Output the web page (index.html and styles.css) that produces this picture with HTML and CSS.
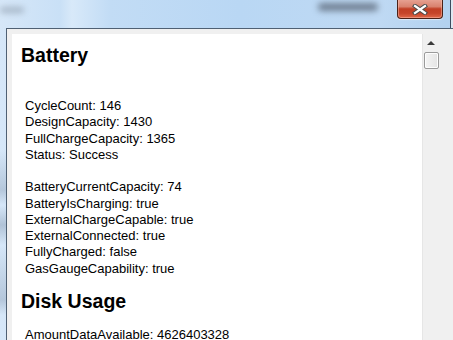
FILE: index.html
```html
<!DOCTYPE html>
<html lang="en">
<head>
    <meta charset="UTF-8">
    <title>Device Info</title>
    <link rel="stylesheet" href="styles.css">
</head>
<body>
    <div class="window">
        <!-- glass title bar -->
        <div class="titlebar">
            <span class="smudge smudge-left"></span>
            <span class="smudge smudge-right"></span>
            <button class="close-btn" aria-label="Close">
                <svg width="16" height="11" viewBox="0 0 16 11">
                    <path d="M3 2 L13 9 M13 2 L3 9" stroke="#4b4b4b" stroke-width="4.2" stroke-linecap="square"/>
                    <path d="M3 2 L13 9 M13 2 L3 9" stroke="#ffffff" stroke-width="2.2" stroke-linecap="square"/>
                </svg>
            </button>
        </div>

        <div class="client">
            <div class="content">
                <h2>Battery</h2>
                <div class="props lead">
                    <p>CycleCount: 146<br>DesignCapacity: 1430<br>FullChargeCapacity: 1365<br>Status: Success</p>
                    <p>BatteryCurrentCapacity: 74<br>BatteryIsCharging: true<br>ExternalChargeCapable: true<br>ExternalConnected: true<br>FullyCharged: false<br>GasGaugeCapability: true</p>
                </div>

                <h2>Disk Usage</h2>
                <div class="props">
                    <p>AmountDataAvailable: 4626403328</p>
                </div>
            </div>

            <!-- vertical scrollbar -->
            <div class="scrollbar">
                <div class="arrow-up"></div>
                <div class="thumb"></div>
            </div>
        </div>
    </div>
</body>
</html>
```

FILE: styles.css
```css
html, body {
    margin: 0;
    height: 100%;
    overflow: hidden;
}

body {
    background: #dfe8f1;
    font-family: "Liberation Sans", Arial, sans-serif;
}

/* Aero glass frame */
.window {
    width: 450px;
    height: 340px;
    border-right: 1px solid #3d4c5e;
    background:
        linear-gradient(to bottom, rgba(255,255,255,0) 150px, rgba(120,140,165,0.35) 190px, rgba(255,255,255,0) 205px, rgba(120,140,165,0.4) 225px, rgba(255,255,255,0) 245px, rgba(120,140,165,0.35) 300px, rgba(255,255,255,0) 315px),
        linear-gradient(to right, #d6e7f8 0, #c9e0f6 60px, #d8e9f9 72px, #c2dcf5 110px, #b9d7f4 240px, #bfd9f3 380px, #b3d2f0 445px);
    display: flex;
    flex-direction: column;
}

.titlebar {
    height: 28px;
    position: relative;
    flex: none;
}

/* blurred shapes seen through the glass */
.smudge {
    position: absolute;
    filter: blur(3px);
    border-radius: 4px;
}

.smudge-left {
    left: 0;
    top: 7px;
    width: 24px;
    height: 6px;
    background: rgba(110, 125, 140, 0.45);
}

.smudge-right {
    left: 318px;
    top: 3px;
    width: 60px;
    height: 8px;
    background: rgba(70, 80, 95, 0.65);
}

.close-btn {
    position: absolute;
    left: 397px;
    top: -1px;
    width: 46px;
    height: 20px;
    padding: 0;
    border: 1px solid #4a2118;
    border-top: none;
    border-radius: 0 0 4px 4px;
    background: linear-gradient(to bottom, #e8a596 0%, #d9826e 40%, #c13f25 52%, #c5452a 75%, #e0694a 100%);
    box-shadow: inset 0 0 0 1px rgba(255, 200, 185, 0.45), 0 1px 1px rgba(255,255,255,0.5);
    display: flex;
    justify-content: center;
    align-items: center;
}

.close-btn svg {
    display: block;
    margin-top: 1px;
}

/* client area */
.client {
    margin-left: 6px;
    width: 436px;
    flex: 1;
    border: 1px solid #4f6073;
    border-bottom: none;
    background: #f0f0f0;
    padding: 5px 5px 0 5px;
    display: flex;
    min-height: 0;
}

.content {
    width: 401px;
    padding-left: 9px;
    background: #fff;
    overflow: hidden;
    color: #000;
}

.content h2 {
    font-size: 19.5px;
    line-height: 22px;
    font-weight: bold;
    margin: 13px 0 15px;
}

.content h2:first-child {
    margin-top: 10px;
}

.props {
    padding-left: 4px;
}

.props.lead {
    padding-top: 17px;
}

.props p {
    margin: 0;
    font-size: 13px;
    line-height: 16.25px;
}

.props p + p {
    margin-top: 16.25px;
}

.scrollbar {
    width: 16px;
    background: #f0f0f0;
    border-left: 1px solid #e6e6e6;
    display: flex;
    flex-direction: column;
    align-items: center;
}

.arrow-up {
    width: 0;
    height: 0;
    margin-top: 7px;
    border-left: 4px solid transparent;
    border-right: 4px solid transparent;
    border-bottom: 4px solid #3a3a3a;
}

.thumb {
    margin-top: 7px;
    width: 13px;
    height: 15px;
    border: 1px solid #9a9a9a;
    border-radius: 2px;
    background: linear-gradient(to right, #f4f4f4, #e4e4e4);
    box-shadow: inset 0 0 0 1px #fdfdfd;
}
```
